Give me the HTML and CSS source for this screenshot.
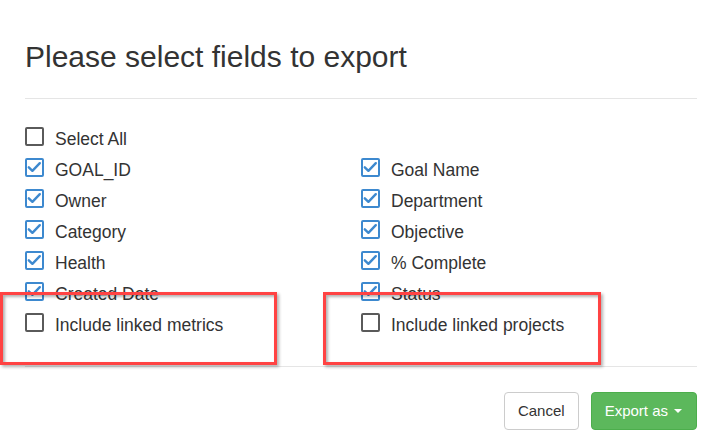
FILE: index.html
```html
<!DOCTYPE html>
<html>
  <head>
    <title>Export fields</title>
    <meta name="viewport" content="width=device-width, initial-scale=1" />
    <link rel="stylesheet" href="styles.css">
  </head>

  <body>
    <div class="modal">
      <div class="modal-header">
        <h3>Please select fields to export</h3>
      </div>

      <div class="modal-body">
        <div class="fields">
          <label class="field">
            <span class="box"></span>
            <span>Select All</span>
          </label>
          <span></span>

          <label class="field checked">
            <span class="box"><svg viewBox="0 0 19 19"><path d="M3.8 9.3 L7.4 12.8 L14.8 5.2" /></svg></span>
            <span>GOAL_ID</span>
          </label>
          <label class="field checked">
            <span class="box"><svg viewBox="0 0 19 19"><path d="M3.8 9.3 L7.4 12.8 L14.8 5.2" /></svg></span>
            <span>Goal Name</span>
          </label>

          <label class="field checked">
            <span class="box"><svg viewBox="0 0 19 19"><path d="M3.8 9.3 L7.4 12.8 L14.8 5.2" /></svg></span>
            <span>Owner</span>
          </label>
          <label class="field checked">
            <span class="box"><svg viewBox="0 0 19 19"><path d="M3.8 9.3 L7.4 12.8 L14.8 5.2" /></svg></span>
            <span>Department</span>
          </label>

          <label class="field checked">
            <span class="box"><svg viewBox="0 0 19 19"><path d="M3.8 9.3 L7.4 12.8 L14.8 5.2" /></svg></span>
            <span>Category</span>
          </label>
          <label class="field checked">
            <span class="box"><svg viewBox="0 0 19 19"><path d="M3.8 9.3 L7.4 12.8 L14.8 5.2" /></svg></span>
            <span>Objective</span>
          </label>

          <label class="field checked">
            <span class="box"><svg viewBox="0 0 19 19"><path d="M3.8 9.3 L7.4 12.8 L14.8 5.2" /></svg></span>
            <span>Health</span>
          </label>
          <label class="field checked">
            <span class="box"><svg viewBox="0 0 19 19"><path d="M3.8 9.3 L7.4 12.8 L14.8 5.2" /></svg></span>
            <span>% Complete</span>
          </label>

          <label class="field checked">
            <span class="box"><svg viewBox="0 0 19 19"><path d="M3.8 9.3 L7.4 12.8 L14.8 5.2" /></svg></span>
            <span>Created Date</span>
          </label>
          <label class="field checked">
            <span class="box"><svg viewBox="0 0 19 19"><path d="M3.8 9.3 L7.4 12.8 L14.8 5.2" /></svg></span>
            <span>Status</span>
          </label>

          <label class="field">
            <span class="box"></span>
            <span>Include linked metrics</span>
          </label>
          <label class="field">
            <span class="box"></span>
            <span>Include linked projects</span>
          </label>
        </div>
      </div>

      <div class="modal-footer">
        <button class="btn btn-default">Cancel</button>
        <button class="btn btn-success">Export as <span class="caret"></span></button>
      </div>

      <!-- annotation marks over the screenshot -->
      <div class="highlight highlight-left"></div>
      <div class="highlight highlight-right"></div>
    </div>
  </body>
</html>
```

FILE: styles.css
```css
body {
  margin: 0;
  background: #fff;
  color: #333;
  font-family: "Liberation Sans", Arial, Helvetica, sans-serif;
}

.modal {
  position: relative;
  width: 724px;
  height: 446px;
  padding: 0 27px 0 25px;
  box-sizing: border-box;
}

.modal-header {
  padding: 40px 0 25px;
  border-bottom: 1px solid #e5e5e5;
}

.modal-header h3 {
  margin: 0;
  font-size: 30px;
  font-weight: normal;
  line-height: 33px;
}

.modal-body {
  padding: 25px 0;
}

.fields {
  display: grid;
  grid-template-columns: 1fr 1fr;
}

.field {
  display: flex;
  align-items: flex-start;
  gap: 11px;
  font-size: 17.5px;
  line-height: 31px;
}

.box {
  flex: none;
  width: 19px;
  height: 19px;
  margin-top: 3px;
  border: 2px solid #5a5a5a;
  border-radius: 2px;
  box-sizing: border-box;
  background: #fff;
}

.checked .box {
  border-color: #3d89cf;
}

.box svg {
  display: block;
  width: 19px;
  height: 19px;
  margin: -2px;
}

.box path {
  fill: none;
  stroke: #3d89cf;
  stroke-width: 2.4;
  stroke-linecap: round;
  stroke-linejoin: round;
}

.modal-footer {
  display: flex;
  justify-content: flex-end;
  gap: 12px;
  padding-top: 25px;
  border-top: 1px solid #e5e5e5;
}

.btn {
  display: inline-flex;
  align-items: center;
  height: 38px;
  padding: 0 13px;
  border: 1px solid #ccc;
  border-radius: 4px;
  font-family: inherit;
  font-size: 15px;
  line-height: 22px;
  background: #fff;
  color: #333;
}

.btn-success {
  padding: 0 14px 0 13px;
  background: #5cb85c;
  border-color: #4cae4c;
  color: #fff;
}

.caret {
  width: 0;
  height: 0;
  margin-left: 6px;
  border-top: 4px solid #fff;
  border-left: 4px solid transparent;
  border-right: 4px solid transparent;
}

.highlight {
  position: absolute;
  top: 292px;
  height: 73px;
  border: 3px solid #ff4343;
  box-sizing: border-box;
  box-shadow: 2px 2px 3px rgba(0, 0, 0, 0.3), inset 2px 2px 3px rgba(0, 0, 0, 0.3);
}

.highlight-left {
  left: 0;
  width: 277px;
}

.highlight-right {
  left: 323px;
  width: 278px;
}
```
